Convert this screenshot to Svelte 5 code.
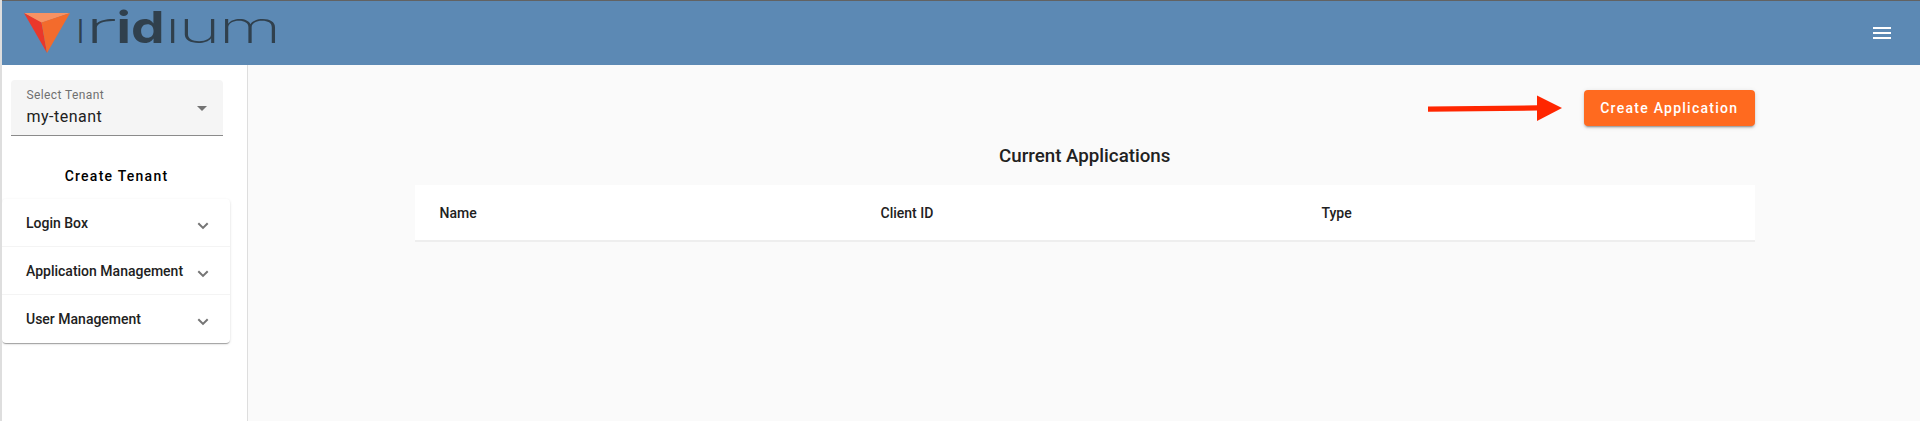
<script>
  const sections = ['Login Box', 'Application Management', 'User Management'];
  const columns = ['Name', 'Client ID', 'Type'];
</script>

<div class="app">
  <header class="topbar">
    <svg class="logo" width="280" height="64" viewBox="0 0 280 64" role="img" aria-label="Iridium">
      <path d="M22 12H68L39 22Z" fill="#f79263" />
      <path d="M22 12L39.500 21.500L45 52Z" fill="#ea382b" />
      <path d="M68 12L39.500 21.500L45 52Z" fill="#f36b2c" />
      <g class="wordmark">
        <text class="thin" x="74.500" y="42" textLength="8" lengthAdjust="spacingAndGlyphs">ı</text>
        <text x="81.500" y="42" textLength="34" lengthAdjust="spacingAndGlyphs">r</text>
        <text class="strong" x="114.500" y="42" textLength="48" lengthAdjust="spacingAndGlyphs">id</text>
        <text x="162.500" y="42" textLength="114.500" lengthAdjust="spacingAndGlyphs" letter-spacing="-1.500">ıum</text>
      </g>
    </svg>
    <button class="menu" aria-label="Menu">
      <svg width="24" height="24" viewBox="0 0 24 24"><path d="M3 18h18v-2H3v2zm0-5h18v-2H3v2zm0-7v2h18V6H3z" fill="#fff" /></svg>
    </button>
  </header>
  <div class="body">
    <aside>
      <div class="select">
        <div>
          <div class="label">Select Tenant</div>
          <div class="value">my-tenant</div>
        </div>
        <svg width="10" height="5" viewBox="0 0 10 5"><path d="M0 0h10L5 5z" fill="#737373" /></svg>
      </div>
      <button class="create-tenant">Create Tenant</button>
      <div class="panels">
        {#each sections as s}
          <div class="panel">
            <span>{s}</span>
            <svg width="12" height="8" viewBox="0 0 12 8"><path d="M1.300 1.200L6 5.900L10.700 1.200" fill="none" stroke="#757575" stroke-width="2" /></svg>
          </div>
        {/each}
      </div>
    </aside>
    <main>
      <div class="actions">
        <svg width="136" height="28" viewBox="0 0 136 28">
          <path d="M1 12.500L111 11.300V16.500L1 17.800Z" fill="#ff2600" />
          <path d="M110 1.500L135 14L110 27Z" fill="#ff2600" />
        </svg>
        <button class="create-app">Create Application</button>
      </div>
      <h1>Current Applications</h1>
      <div class="table">
        {#each columns as c}
          <div>{c}</div>
        {/each}
      </div>
    </main>
  </div>
</div>

<style>
  :global(body) { margin: 0; }
  .app {
    box-sizing: border-box;
    height: 421px;
    border-left: 2px solid #dedede;
    display: flex;
    flex-direction: column;
    overflow: hidden;
    background: #fafafa;
    font-family: Roboto, sans-serif;
    color: #212121;
  }
  button { font-family: inherit; border: 0; padding: 0; background: none; }
  svg { display: block; flex: none; }
  .topbar {
    box-sizing: border-box;
    height: 65px;
    flex: none;
    display: flex;
    justify-content: space-between;
    background: #5c89b4;
    border-top: 1px solid #626262;
  }
  .wordmark { font-family: Inter, sans-serif; font-size: 44px; font-weight: 200; fill: #30404d; }
  .thin { font-weight: 300; }
  .strong { font-weight: 700; }
  .menu { padding: 0 26px 0 0; }
  .body { flex: 1; display: flex; }
  aside {
    box-sizing: border-box;
    width: 246px;
    flex: none;
    background: #fff;
    border-right: 1px solid #dedede;
  }
  .select {
    box-sizing: border-box;
    width: 212px;
    height: 56px;
    margin: 15px 0 0 8.5px;
    padding: 7px 16px 0;
    display: flex;
    justify-content: space-between;
    background: #f5f5f5;
    border-bottom: 1px solid #8b8b8b;
    border-radius: 4px 4px 0 0;
  }
  .select svg { margin-top: 19px; }
  .label { font-size: 12px; line-height: 16px; letter-spacing: .4px; color: #707070; }
  .value { font-size: 16px; line-height: 24px; letter-spacing: .5px; margin-top: 2px; }
  .create-tenant {
    display: block;
    width: 229px;
    height: 36px;
    margin: 22px 0 5px;
    font-size: 14px;
    font-weight: 500;
    letter-spacing: 1.25px;
    color: #000;
  }
  .panels {
    width: 228px;
    border-radius: 4px;
    box-shadow: 0 2px 1px -1px rgba(0,0,0,.2), 0 1px 1px rgba(0,0,0,.14), 0 1px 3px rgba(0,0,0,.12);
  }
  .panel {
    box-sizing: border-box;
    height: 48px;
    padding: 0 21px 0 24px;
    display: flex;
    align-items: center;
    justify-content: space-between;
    font-size: 14px;
    font-weight: 500;
  }
  .panel + .panel { box-shadow: 0 -1px 0 #f4f4f4; }
  .panel svg { margin-top: 5px; }
  main { width: 1339.5px; margin-left: 167px; }
  .actions { display: flex; justify-content: flex-end; align-items: center; padding-top: 25px; gap: 21px; }
  .create-app {
    width: 170.5px;
    height: 36px;
    border-radius: 4px;
    background: #ff6a1f;
    color: #fff;
    font-size: 14px;
    font-weight: 500;
    letter-spacing: 1.25px;
    box-shadow: 0 3px 1px -2px rgba(0,0,0,.2), 0 2px 2px rgba(0,0,0,.14), 0 1px 5px rgba(0,0,0,.12);
  }
  h1 { margin: 15px 0 13px; font-size: 18.72px; font-weight: 500; line-height: 31px; text-align: center; }
  .table {
    height: 55px;
    padding-left: 24.5px;
    display: grid;
    grid-template-columns: repeat(3, 441px);
    align-items: center;
    background: #fff;
    border-bottom: 2px solid #eee;
    font-size: 14px;
    font-weight: 500;
  }
</style>
